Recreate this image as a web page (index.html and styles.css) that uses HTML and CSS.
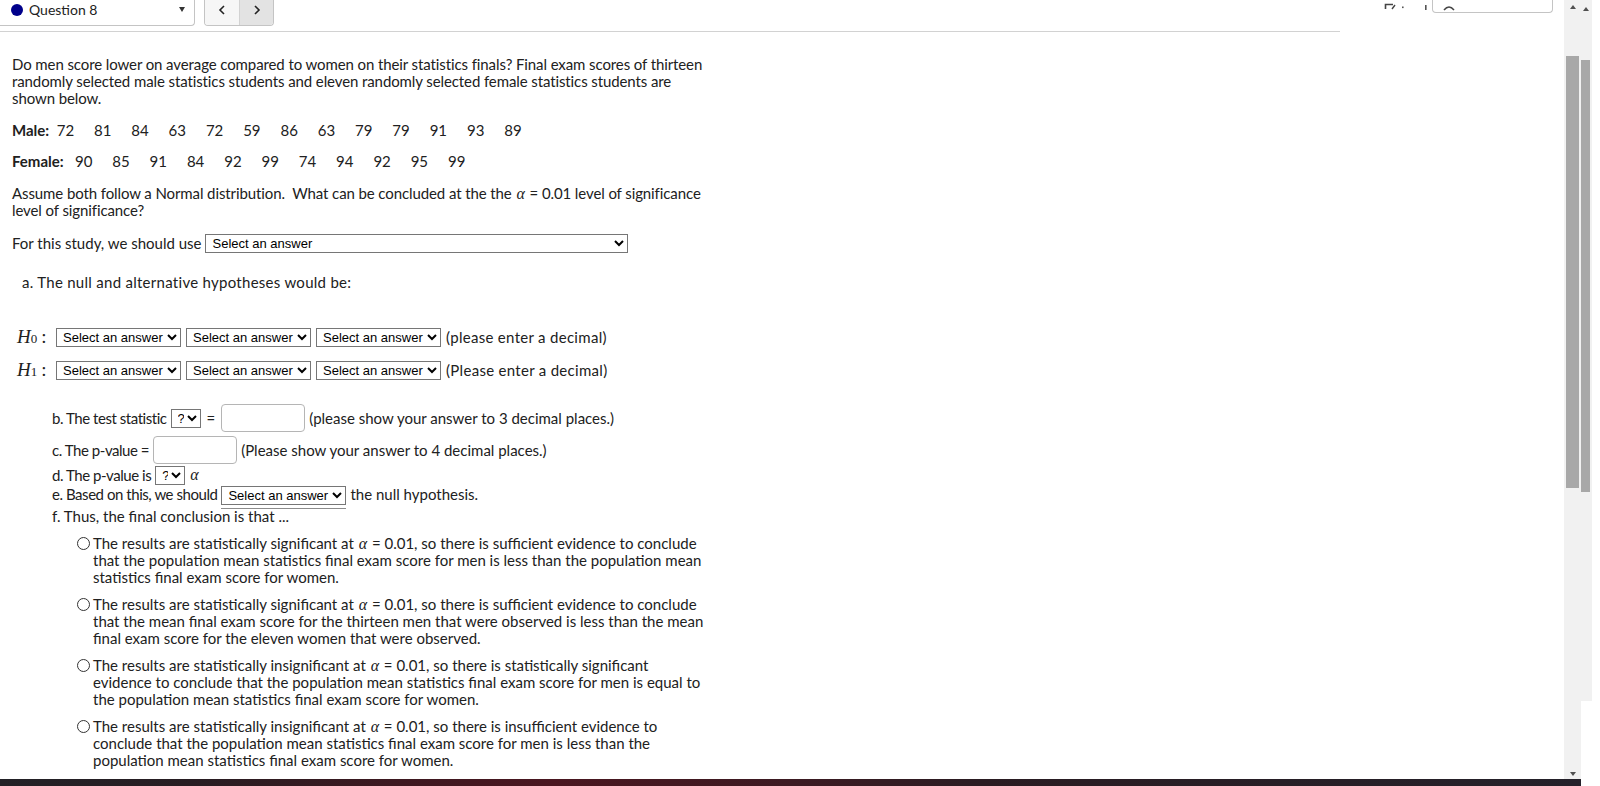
FILE: index.html
```html
<!DOCTYPE html>
<html lang="en">
<head>
<meta charset="utf-8">
<title>Question 8</title>
<link rel="stylesheet" href="styles.css">
</head>
<body>
<div class="screen">
  <div class="main">
    <div class="topbar">
      <div class="qselect">
        <span class="dot"></span>
        <span class="qlabel">Question 8</span>
        <span class="caret"></span>
      </div>
      <div class="nav">
        <button class="navbtn prev" type="button"><svg width="8" height="10" viewBox="0 0 8 10"><path d="M6 1 L2 5 L6 9" fill="none" stroke="#222" stroke-width="1.6"/></svg></button>
        <button class="navbtn next" type="button"><svg width="8" height="10" viewBox="0 0 8 10"><path d="M2 1 L6 5 L2 9" fill="none" stroke="#222" stroke-width="1.6"/></svg></button>
      </div>
      <div class="tools">
        <svg width="46" height="12" viewBox="0 0 46 12">
          <path d="M1.5 9 V4.5 H9" fill="none" stroke="#444" stroke-width="1.6"/>
          <path d="M8 9 L11 5" fill="none" stroke="#444" stroke-width="1.4"/>
          <rect x="18" y="6.5" width="1.6" height="1.6" fill="#555"/>
          <rect x="41" y="5" width="1.6" height="5" fill="#555"/>
        </svg>
      </div>
      <div class="searchbox">
        <svg width="14" height="8" viewBox="0 0 14 8"><path d="M2 7 Q7 1 12 7" fill="none" stroke="#444" stroke-width="1.5"/></svg>
      </div>
    </div>
    <div class="rule"></div>

    <div class="question">
      <p class="intro">Do men score lower on average compared to women on their statistics finals? Final exam scores of thirteen randomly selected male statistics students and eleven randomly selected female statistics students are shown below.</p>

      <p class="data"><b class="lbl male">Male:</b><span class="n">72</span><span class="n">81</span><span class="n">84</span><span class="n">63</span><span class="n">72</span><span class="n">59</span><span class="n">86</span><span class="n">63</span><span class="n">79</span><span class="n">79</span><span class="n">91</span><span class="n">93</span><span class="n">89</span></p>

      <p class="data female-row"><b class="lbl female">Female:</b><span class="n">90</span><span class="n">85</span><span class="n">91</span><span class="n">84</span><span class="n">92</span><span class="n">99</span><span class="n">74</span><span class="n">94</span><span class="n">92</span><span class="n">95</span><span class="n">99</span></p>

      <p class="assume">Assume both follow a Normal distribution.&nbsp; What can be concluded at the the <span class="alpha">α</span> = 0.01 level of significance level of significance?</p>

      <div class="row study">
        <span>For this study, we should use</span>
        <select class="sel wide"><option>Select an answer</option></select>
      </div>

      <p class="parta">a. The null and alternative hypotheses would be:</p>

      <div class="row hyp h0">
        <span class="hlabel"><i>H</i><sub>0</sub><span class="colon">:</span></span>
        <select class="sel std"><option>Select an answer</option></select>
        <select class="sel std"><option>Select an answer</option></select>
        <select class="sel std"><option>Select an answer</option></select>
        <span class="note">(please enter a decimal)</span>
      </div>
      <div class="row hyp h1">
        <span class="hlabel"><i>H</i><sub>1</sub><span class="colon">:</span></span>
        <select class="sel std"><option>Select an answer</option></select>
        <select class="sel std"><option>Select an answer</option></select>
        <select class="sel std"><option>Select an answer</option></select>
        <span class="note">(Please enter a decimal)</span>
      </div>

      <div class="parts">
        <div class="row pb">
          <span class="plabel">b. The test statistic</span>
          <select class="sel q"><option>?</option></select>
          <span class="eq">=</span>
          <input class="ans" type="text">
          <span>(please show your answer to 3 decimal places.)</span>
        </div>
        <div class="row pc">
          <span class="plabel">c. The p-value =</span>
          <input class="ans" type="text">
          <span>(Please show your answer to 4 decimal places.)</span>
        </div>
        <div class="row pd">
          <span class="plabel">d. The p-value is</span>
          <select class="sel q"><option>?</option></select>
          <span class="alpha">α</span>
        </div>
        <div class="row pe">
          <span class="plabel">e. Based on this, we should</span>
          <span class="uline"><select class="sel std"><option>Select an answer</option></select></span>
          <span>the null hypothesis.</span>
        </div>
        <p class="pf">f. Thus, the final conclusion is that ...</p>
      </div>

      <div class="opts">
        <div class="opt first">
          <span class="radio"></span>
          <span class="otext">The results are statistically significant at <span class="alpha">α</span> = 0.01, so there is sufficient evidence to conclude that the population mean statistics final exam score for men is less than the population mean statistics final exam score for women.</span>
        </div>
        <div class="opt">
          <span class="radio"></span>
          <span class="otext">The results are statistically significant at <span class="alpha">α</span> = 0.01, so there is sufficient evidence to conclude that the mean final exam score for the thirteen men that were observed is less than the mean final exam score for the eleven women that were observed.</span>
        </div>
        <div class="opt">
          <span class="radio"></span>
          <span class="otext">The results are statistically insignificant at <span class="alpha">α</span> = 0.01, so there is statistically significant evidence to conclude that the population mean statistics final exam score for men is equal to the population mean statistics final exam score for women.</span>
        </div>
        <div class="opt">
          <span class="radio"></span>
          <span class="otext">The results are statistically insignificant at <span class="alpha">α</span> = 0.01, so there is insufficient evidence to conclude that the population mean statistics final exam score for men is less than the population mean statistics final exam score for women.</span>
        </div>
      </div>
    </div>
  </div>

  <div class="sb1">
    <div class="arrow up"></div>
    <div class="thumb"></div>
    <div class="fill"></div>
    <div class="arrow down"></div>
  </div>
  <div class="sb2">
    <div class="arrow up"></div>
    <div class="thumb"></div>
  </div>
  <div class="blank"></div>
  <div class="bottombar"></div>
</div>
</body>
</html>
```

FILE: styles.css
```css
* { box-sizing: border-box; }
html, body { margin: 0; padding: 0; background: #fff; }
body {
  font-family: Lato, "Liberation Sans", sans-serif;
  font-size: 15px;
  color: #212121;
}
p { margin: 0; }

.screen {
  width: 1600px;
  height: 786px;
  overflow: hidden;
  display: grid;
  grid-template-columns: 1564px 17px 11px 1fr;
  grid-template-rows: 779px 7px;
}

.main { grid-column: 1; grid-row: 1; overflow: hidden; }

/* ---------- top bar ---------- */
.topbar { display: flex; align-items: flex-start; height: 26px; }
.qselect {
  width: 195px;
  height: 26px;
  border-right: 1px solid #c4c4c4;
  border-bottom: 1px solid #c4c4c4;
  border-radius: 0 0 4px 0;
  display: flex;
  align-items: center;
  padding: 0 9px 6px 11px;
}
.dot { width: 12px; height: 12px; border-radius: 50%; background: #00008b; flex-shrink: 0; }
.qlabel { margin-left: 6px; font-size: 14px; color: #222; }
.caret {
  margin-left: auto;
  width: 0; height: 0;
  border-left: 3.5px solid transparent;
  border-right: 3.5px solid transparent;
  border-top: 5px solid #333;
}
.nav {
  margin-left: 9px;
  display: flex;
  height: 26px;
  border: 1px solid #c4c4c4;
  border-top: none;
  border-radius: 0 0 4px 4px;
  overflow: hidden;
}
.navbtn {
  width: 34px;
  height: 25px;
  border: none;
  margin: 0;
  padding: 0 0 5px;
  background: #f6f6f6;
  display: flex;
  align-items: center;
  justify-content: center;
}
.navbtn.next { background: #e3e3e3; border-left: 1px solid #d2d2d2; }
.tools { margin-left: auto; height: 12px; }
.tools svg { display: block; }
.searchbox {
  margin: 0 11px 0 2px;
  width: 121px;
  height: 13px;
  border: 1px solid #c4c4c4;
  border-top: none;
  border-radius: 0 0 4px 4px;
  padding: 3px 0 0 9px;
}
.searchbox svg { display: block; }
.rule { width: 1340px; height: 1px; background: #d2d2d2; margin-top: 5px; }

/* ---------- question ---------- */
.question { padding-left: 12px; width: 714px; line-height: 17px; }
.intro { margin-top: 24px; letter-spacing: -0.1px; }
.data { margin-top: 15px; white-space: nowrap; }
.female-row { margin-top: 14px; }
.lbl { display: inline-block; font-weight: 700; }
.lbl.male { width: 44.7px; }
.lbl.female { width: 63px; }
.n { display: inline-block; width: 37.3px; }
.assume { margin-top: 15px; letter-spacing: -0.1px; }

.alpha {
  display: inline-block;
  font-family: "Liberation Serif", "DejaVu Serif", serif;
  font-style: italic;
  font-size: 16px;
  line-height: 14px;
  height: 14px;
  padding: 0 1px;
  letter-spacing: 0;
}

.row { display: flex; align-items: center; white-space: nowrap; }
.study { margin-top: 14px; height: 20px; gap: 4px; }

.sel {
  font-family: "Liberation Sans", Arial, sans-serif;
  font-size: 13px;
  height: 19px;
  border: 1px solid #767676;
  border-radius: 0;
  background: #fff;
  color: #000;
  padding: 0 0 0 2px;
  margin: 0;
}
.sel.wide { width: 423px; }
.sel.std { width: 125px; }
.sel.q { width: 30px; }

.parta { margin-top: 21px; padding-left: 10px; letter-spacing: 0.28px; }

.hyp { padding-left: 5px; height: 22px; gap: 5px; }
.hyp .note { letter-spacing: 0.3px; }
.h0 { margin-top: 35px; }
.h1 { margin-top: 11px; }
.hlabel {
  font-family: "Liberation Serif", "DejaVu Serif", serif;
  font-size: 19px;
  width: 34px;
  display: inline-flex;
  align-items: baseline;
}
.hlabel sub { font-size: 13px; vertical-align: -4px; font-style: normal; }
.hlabel .colon { margin-left: 4px; font-style: normal; }

.parts { padding-left: 40px; }
.plabel { letter-spacing: -0.45px; }
.pb { margin-top: 23px; height: 28px; gap: 4px; }
.pb .eq { margin: 0 2px; }
.pc { margin-top: 4px; height: 28px; gap: 4px; }
.pd { margin-top: 1px; height: 20px; gap: 4px; }
.pe { height: 19px; gap: 4px; }
.uline { display: inline-block; border-bottom: 1px solid #8c8c8c; padding-bottom: 3px; margin-bottom: -5px; }
.pf { margin-top: 4px; }
.ans {
  width: 84px;
  height: 28px;
  border: 1px solid #b5b5b5;
  border-radius: 4px;
  margin: 0;
  background: #fff;
}

.opts { padding-left: 65px; }
.opt { display: flex; margin-top: 10px; }
.opt.first { margin-top: 10px; }
.radio {
  flex-shrink: 0;
  width: 13px;
  height: 13px;
  border: 1px solid #333;
  border-radius: 50%;
  margin: 2px 3px 0 0;
}
.otext { display: block; width: 617px; }

/* ---------- scrollbars ---------- */
.sb1 {
  grid-column: 2; grid-row: 1;
  background: #f1f1f1;
  display: flex;
  flex-direction: column;
  align-items: center;
}
.sb1 .arrow { height: 14px; width: 17px; display: flex; justify-content: center; }
.sb1 .arrow.up { align-items: center; }
.sb1 .arrow.down { align-items: center; padding-top: 3px; }
.arrow::before {
  content: "";
  width: 0; height: 0;
  border-left: 3.5px solid transparent;
  border-right: 3.5px solid transparent;
}
.arrow.up::before { border-bottom: 4px solid #505050; }
.arrow.down::before { border-top: 4px solid #505050; }
.sb1 .thumb { width: 13px; height: 432px; margin-top: 42px; background: #a8a8a8; }
.sb1 .fill { flex: 1; }

.sb2 {
  grid-column: 3; grid-row: 1;
  height: 701px;
  background: #f1f1f1;
  display: flex;
  flex-direction: column;
}
.sb2 .arrow { height: 17px; width: 9px; display: flex; justify-content: center; align-items: center; }
.sb2 .thumb { width: 9px; height: 432px; margin-top: 43px; background: #a8a8a8; }

.blank { grid-column: 4; grid-row: 1 / 3; background: #fff; }

.bottombar {
  grid-column: 1 / 3; grid-row: 2;
  background: linear-gradient(90deg, #222126 0%, #271d22 12%, #3d1820 25%, #4a1620 35%, #3c1a22 50%, #2a1c22 62%, #24212a 100%);
}
```
